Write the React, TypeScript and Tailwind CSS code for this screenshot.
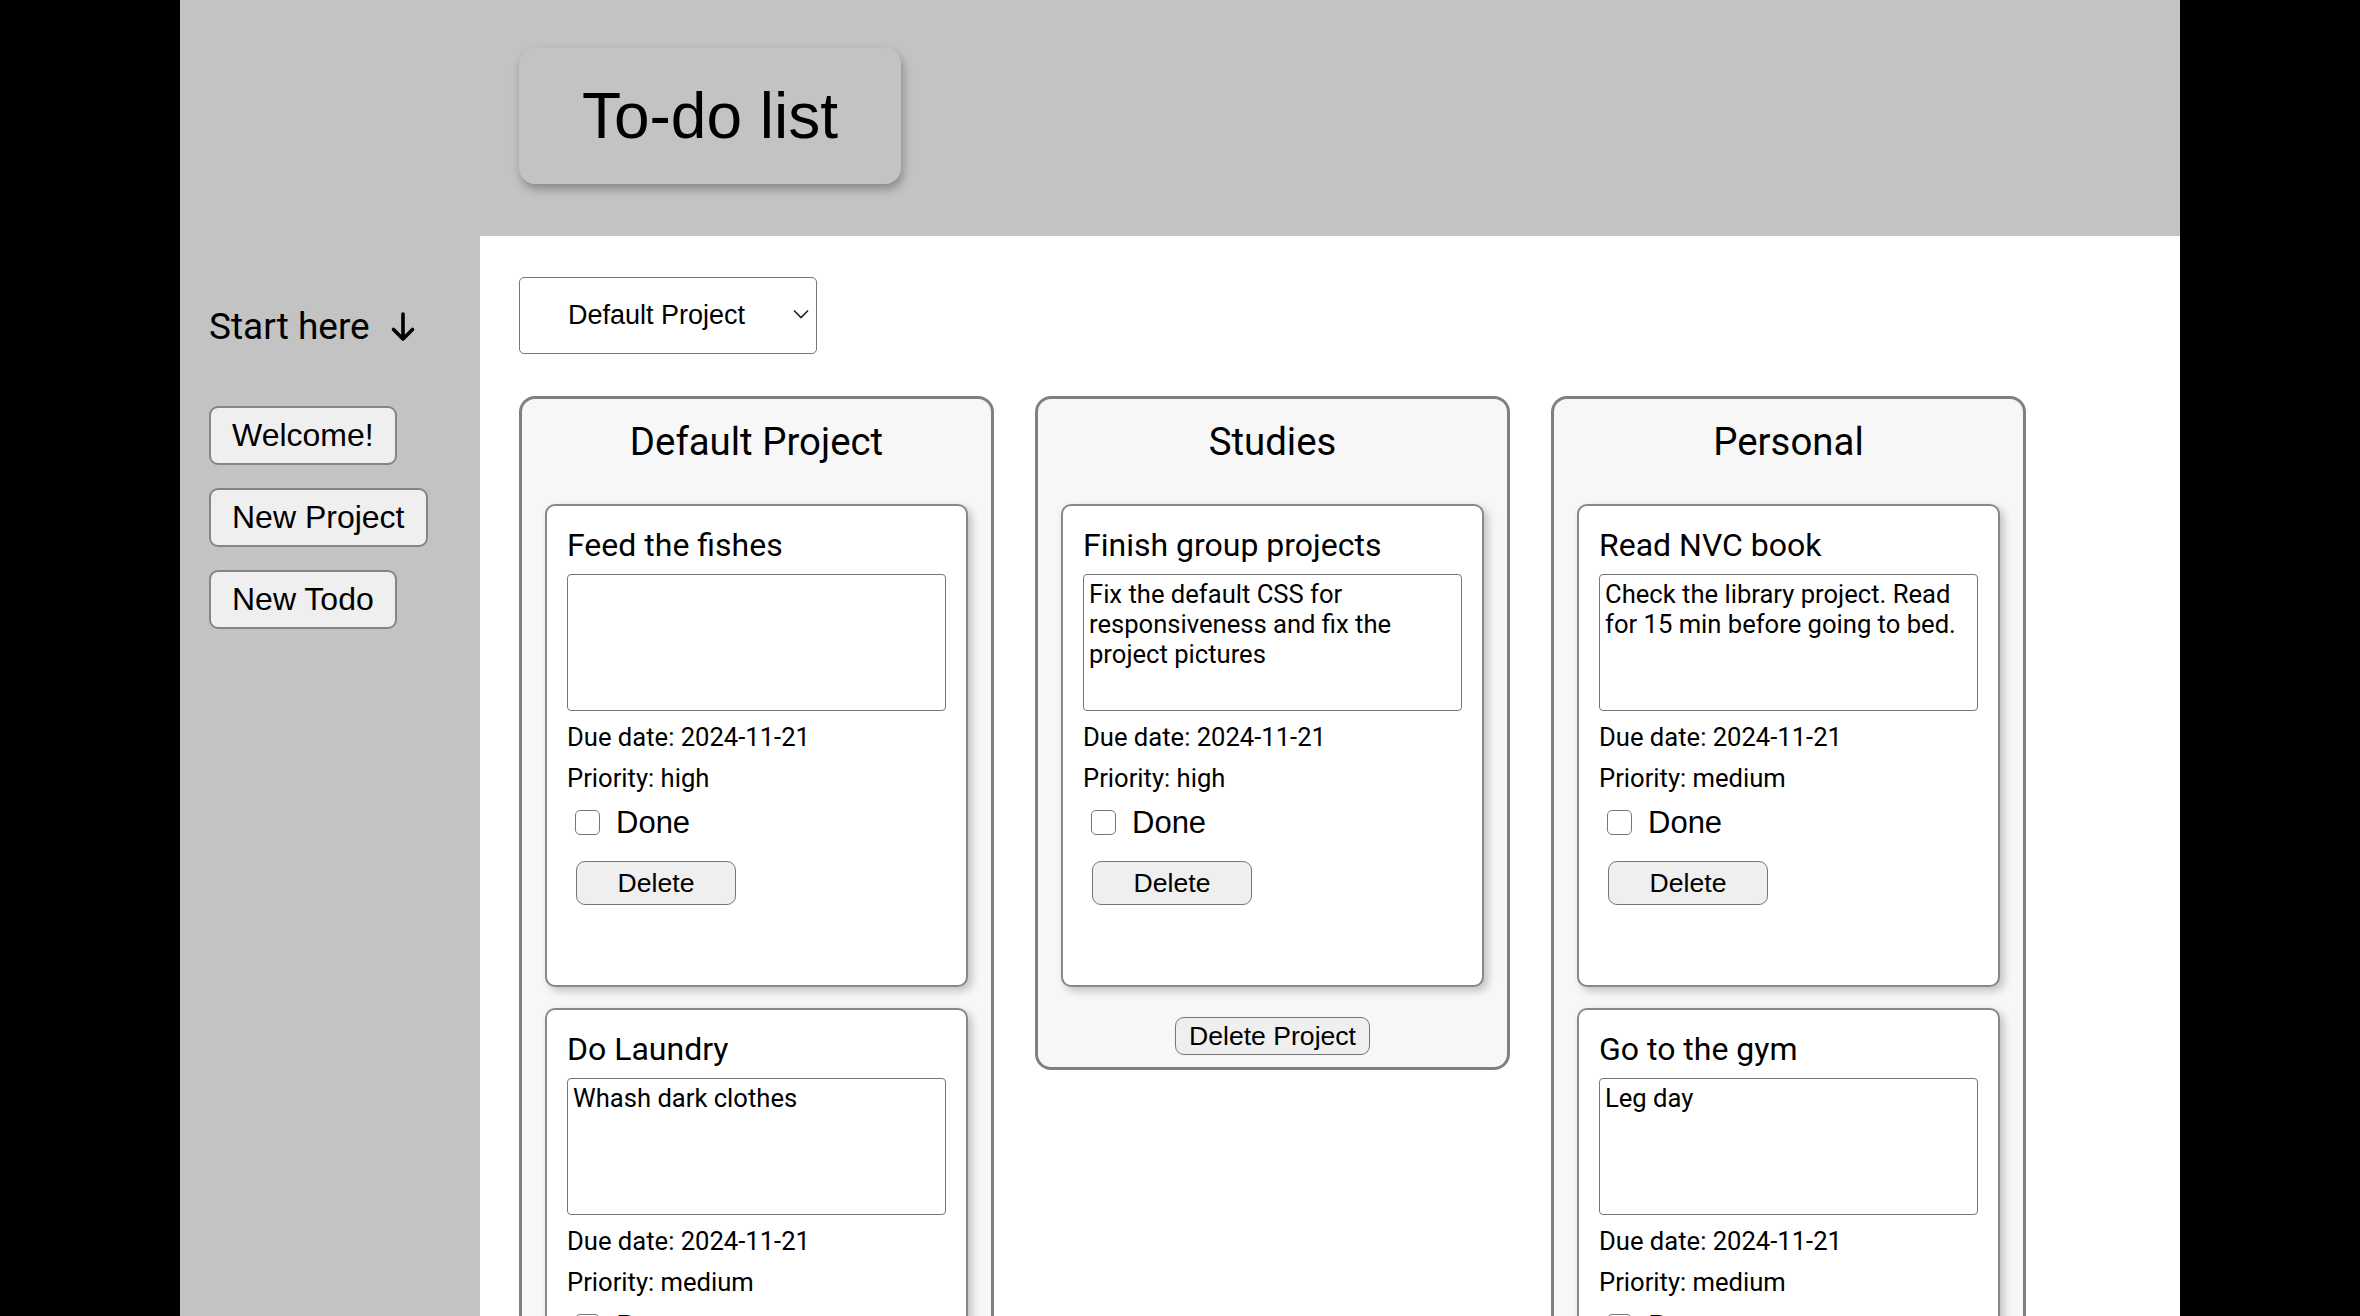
import React from 'react';

type Todo = {
  title: string;
  notes: string;
  due: string;
  priority: string;
};

type Project = {
  name: string;
  todos: Todo[];
};

const projects: Project[] = [
  {
    name: 'Default Project',
    todos: [
      { title: 'Feed the fishes', notes: '', due: '2024-11-21', priority: 'high' },
      { title: 'Do Laundry', notes: 'Whash dark clothes', due: '2024-11-21', priority: 'medium' },
    ],
  },
  {
    name: 'Studies',
    todos: [
      {
        title: 'Finish group projects',
        notes: 'Fix the default CSS for responsiveness and fix the project pictures',
        due: '2024-11-21',
        priority: 'high',
      },
    ],
  },
  {
    name: 'Personal',
    todos: [
      {
        title: 'Read NVC book',
        notes: 'Check the library project. Read for 15 min before going to bed.',
        due: '2024-11-21',
        priority: 'medium',
      },
      { title: 'Go to the gym', notes: 'Leg day', due: '2024-11-21', priority: 'medium' },
    ],
  },
];

const roboto = "font-['Roboto',sans-serif]";
const arial = "font-['Liberation_Sans',Arial,sans-serif]";

function TodoCard({ todo }: { todo: Todo }) {
  return (
    <div className="h-[483px] rounded-[10px] border-2 border-[#888888] bg-white px-[20px] pt-[21px] shadow-[4px_4px_8px_rgba(0,0,0,0.22)]">
      <h3 className={`${roboto} text-[32px] leading-[37px] text-black`}>{todo.title}</h3>
      <textarea
        readOnly
        value={todo.notes}
        className={`${roboto} mt-[10px] block h-[137px] w-full resize-none rounded-[4px] border border-[#767676] bg-white px-[5px] py-[4px] text-[25.6px] leading-[30px] text-black outline-none`}
      />
      <p className={`${roboto} mt-[11px] text-[25.6px] leading-[30px] text-black`}>Due date: {todo.due}</p>
      <p className={`${roboto} mt-[11px] text-[25.6px] leading-[30px] text-black`}>Priority: {todo.priority}</p>
      <label className="mt-[11px] flex items-center">
        <span className="ml-[8px] block h-[25px] w-[25px] rounded-[5px] border-[1.5px] border-[#767676] bg-white" />
        <span className={`${arial} ml-[16px] text-[31px] leading-[37px] text-black`}>Done</span>
      </label>
      <button
        className={`${arial} ml-[9px] mt-[20px] block h-[44px] w-[160px] rounded-[9px] border-[1.5px] border-[#767676] bg-[#efefef] text-[26.6px] leading-[30px] text-black`}
      >
        Delete
      </button>
    </div>
  );
}

function ProjectColumn({ project }: { project: Project }) {
  return (
    <div className="flex w-[475px] shrink-0 flex-col self-start rounded-[16px] border-[3px] border-[#808080] bg-[#f7f7f7] px-[23px] pb-[12px]">
      <h2 className={`${roboto} pt-[20px] text-center text-[38.4px] leading-[45px] text-black`}>{project.name}</h2>
      <div className="mt-[40px] flex flex-col gap-[21px]">
        {project.todos.map((t) => (
          <TodoCard key={t.title} todo={t} />
        ))}
      </div>
      <button
        className={`${arial} mx-auto mt-[30px] h-[38px] rounded-[9px] border-[1.5px] border-[#767676] bg-[#efefef] px-[13px] text-[26.6px] leading-[30px] text-black`}
      >
        Delete Project
      </button>
    </div>
  );
}

export default function App() {
  return (
    <div className="min-h-screen bg-black">
      <div className="mx-auto grid min-h-screen w-[2000px] grid-cols-[300px_1fr] grid-rows-[236px_1fr] bg-[#c4c3c4]">
        {/* header */}
        <header className="col-span-2 pl-[339px] pt-[48px]">
          <div className="flex h-[136px] w-[382px] items-center justify-center rounded-[16px] bg-[#c4c3c4] shadow-[2px_5px_10px_rgba(0,0,0,0.3)]">
            <h1 className={`${arial} text-[64px] leading-none text-black`}>To-do list</h1>
          </div>
        </header>

        {/* sidebar */}
        <aside className="flex flex-col items-start pl-[29px] pt-[70px]">
          <p className={`${roboto} flex items-center text-[37px] leading-[42px] text-black`}>
            Start here
            <svg className="ml-[20px]" width="26" height="32" viewBox="0 0 26 32" fill="none">
              <path d="M13 3v25M3.5 18.5L13 28l9.5-9.5" stroke="black" strokeWidth="3.6" strokeLinecap="round" strokeLinejoin="round" />
            </svg>
          </p>
          <div className="mt-[58px] flex flex-col items-start gap-[23px]">
            {['Welcome!', 'New Project', 'New Todo'].map((b) => (
              <button
                key={b}
                className={`${arial} h-[59px] rounded-[9px] border-2 border-[#858585] bg-[#efefef] px-[21px] text-[32px] leading-[37px] text-black`}
              >
                {b}
              </button>
            ))}
          </div>
        </aside>

        {/* main */}
        <main className="bg-white px-[39px] pt-[41px] pb-[40px]">
          <div className="relative h-[77px] w-[298px]">
            <select
              className={`${arial} h-full w-full appearance-none rounded-[5px] border-[1.5px] border-[#767676] bg-white pl-[48px] text-[27px] text-black`}
              defaultValue="Default Project"
            >
              {projects.map((p) => (
                <option key={p.name}>{p.name}</option>
              ))}
            </select>
            <svg className="pointer-events-none absolute right-[8px] top-[32px]" width="16" height="10" viewBox="0 0 16 10" fill="none">
              <path d="M1 1.5l7 7 7-7" stroke="#222" strokeWidth="1.6" />
            </svg>
          </div>

          <div className="mt-[42px] flex items-start gap-[41px]">
            {projects.map((p) => (
              <ProjectColumn key={p.name} project={p} />
            ))}
          </div>
        </main>
      </div>
    </div>
  );
}
